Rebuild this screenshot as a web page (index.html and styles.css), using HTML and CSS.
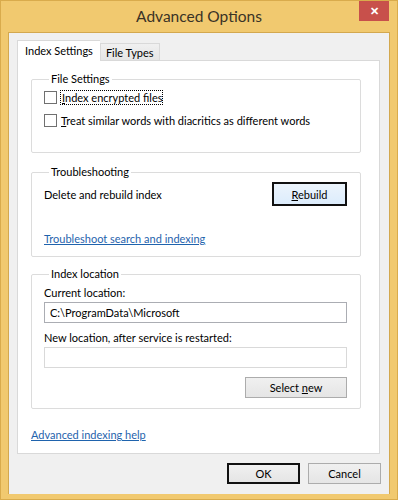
FILE: index.html
```html
<!DOCTYPE html>
<html lang="en">
<head>
  <meta charset="UTF-8" />
  <title>Advanced Options</title>
  <link rel="stylesheet" href="styles.css">
</head>
<body>
  <div class="window">
    <div class="titlebar">
      <span class="title">Advanced Options</span>
      <span class="close">&#x2715;</span>
    </div>
    <div class="client">
      <div class="tabs">
        <div class="tab active">Index Settings</div>
        <div class="tab">File Types</div>
      </div>
      <div class="panel">
        <fieldset class="group group-files">
          <legend>File Settings</legend>
          <label class="check-row"><span class="box"></span><span class="focus"><u>I</u>ndex encrypted files</span></label>
          <label class="check-row"><span class="box"></span><span><u>T</u>reat similar words with diacritics as different words</span></label>
        </fieldset>

        <fieldset class="group group-trouble">
          <legend>Troubleshooting</legend>
          <div class="rebuild-row">
            <span>Delete and rebuild index</span>
            <button class="btn btn-default btn-blue"><u>R</u>ebuild</button>
          </div>
          <a class="link trouble-link" href="#">Troubleshoot search and indexing</a>
        </fieldset>

        <fieldset class="group group-location">
          <legend>Index location</legend>
          <div class="field-label">Current location:</div>
          <div class="textbox">C:\ProgramData\Microsoft</div>
          <div class="field-label second">New location, after service is restarted:</div>
          <div class="textbox disabled"></div>
          <div class="select-row">
            <button class="btn btn-wide">Select <u>n</u>ew</button>
          </div>
        </fieldset>

        <a class="link help-link" href="#">Advanced indexing help</a>
      </div>
      <div class="footer">
        <button class="btn btn-default">OK</button>
        <button class="btn">Cancel</button>
      </div>
    </div>
  </div>
</body>
</html>
```

FILE: styles.css
```css
body {
  margin: 0;
  font-family: "Segoe UI", Lato, sans-serif;
  font-size: 11px;
  color: #000;
}
.window {
  width: 398px;
  height: 500px;
  box-sizing: border-box;
  background: #f1c96f;
  border: 1px solid #d9ab4c;
  padding: 0 7px 0 7px;
  position: relative;
}
.titlebar {
  height: 31px;
  display: flex;
  align-items: center;
  justify-content: center;
}
.title {
  font-size: 15.5px;
  color: #3a3326;
  margin-top: -1px;
}
.close {
  position: absolute;
  top: 0;
  right: 8px;
  width: 30px;
  height: 20px;
  background: #c8504b;
  color: #fff;
  font-size: 11px;
  font-weight: bold;
  display: flex;
  align-items: center;
  justify-content: center;
}
.client {
  background: #f0f0f0;
  height: 462px;
  padding: 7px 9px 0 8px;
  box-sizing: border-box;
  border: 1px solid #d3a84f;
  border-bottom: none;
}
.tabs {
  display: flex;
  align-items: flex-end;
  height: 20px;
}
.tab {
  height: 16px;
  line-height: 17px;
  padding: 0 5px;
  border: 1px solid #d9d9d9;
  border-bottom: none;
  background: linear-gradient(#f0f0f0, #e5e5e5);
}
.tab.active {
  height: 20px;
  line-height: 20px;
  padding: 0 7px;
  background: #fff;
  position: relative;
  z-index: 1;
  margin-bottom: -1px;
  border-right: none;
}
.panel {
  background: #fff;
  border: 1px solid #d9d9d9;
  height: 394px;
  box-sizing: border-box;
  padding: 11px 18px 0 13px;
}
.group {
  margin: 0 0 12px 0;
  padding: 0 13px 0 12px;
  border: 1px solid #dcdcdc;
  border-radius: 2px;
}
.group legend {
  padding: 0 2px;
  margin-left: 5px;
  line-height: 14px;
}
.group-files {
  padding-bottom: 20px;
}
.check-row {
  display: flex;
  align-items: center;
  height: 23px;
}
.box {
  width: 11px;
  height: 11px;
  border: 1px solid #707070;
  background: #fff;
  margin-right: 4px;
}
.focus {
  outline: 1px dotted #000;
  outline-offset: 0;
  padding: 0 0 0 1px;
}
.group-trouble {
  padding-bottom: 9px;
  margin-bottom: 10px;
}
.rebuild-row {
  display: flex;
  align-items: center;
  justify-content: space-between;
  margin-top: 3px;
}
.link {
  color: #1f63ad;
  text-decoration: underline;
  display: block;
  line-height: 16px;
}
.trouble-link {
  margin-top: 25px;
}
.group-location {
  padding-bottom: 10px;
}
.field-label {
  line-height: 16px;
  margin-top: 4px;
}
.field-label.second {
  margin-top: 7px;
}
.textbox {
  height: 19px;
  line-height: 19px;
  border: 1px solid #abadb3;
  padding: 0 5px;
  margin-top: 1px;
  background: #fff;
}
.textbox.disabled {
  border-color: #d9d9d9;
}
.select-row {
  display: flex;
  justify-content: flex-end;
  margin-top: 9px;
}
.help-link {
  margin-top: 18px;
  margin-left: 0;
}
.btn {
  font-family: inherit;
  font-size: 11px;
  color: #000;
  width: 73px;
  height: 21px;
  padding: 0;
  border: 1px solid #acacac;
  background: linear-gradient(#f0f0f0, #e5e5e5);
}
.btn-wide {
  width: 102px;
}
.btn-default {
  border: 2px solid #111;
}
.btn-blue {
  width: 75px;
  height: 24px;
  background: linear-gradient(#ecf4fc, #dcecfc);
}
.footer {
  display: flex;
  justify-content: flex-end;
  gap: 8px;
  margin-top: 9px;
  margin-right: -1px;
}
```
